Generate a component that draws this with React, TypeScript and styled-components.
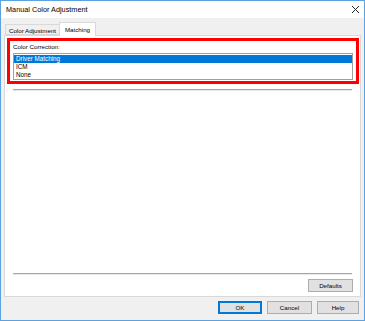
import React from "react";
import styled, { createGlobalStyle } from "styled-components";

const Global = createGlobalStyle`
  html, body { margin: 0; padding: 0; background: #ffffff; }
  * { box-sizing: border-box; }
  body { font-family: "Liberation Sans", Arial, sans-serif; }
`;

const Window = styled.div`
  width: 365px;
  height: 321px;
  border: 1px solid #5ca2e0;
  display: flex;
  flex-direction: column;
  background: #f0f0f0;
`;

const TitleBar = styled.div`
  height: 17px;
  background: #ffffff;
  display: flex;
  align-items: center;
  justify-content: space-between;
  padding: 0 4px 0 5px;
`;

const Title = styled.span`
  font-size: 7.3px;
  color: #000;
  line-height: 9px;
`;

const Body = styled.div`
  flex: 1;
  display: flex;
  flex-direction: column;
  padding: 4px 4px 0 3px;
`;

const TabRow = styled.div`
  height: 13px;
  display: flex;
  align-items: flex-end;
  padding-left: 1px;
  position: relative;
  z-index: 1;
`;

const Tab = styled.div<{ $active?: boolean; $w: number }>`
  width: ${(p) => p.$w}px;
  height: ${(p) => (p.$active ? 14 : 11)}px;
  margin-bottom: ${(p) => (p.$active ? -1 : 0)}px;
  background: ${(p) => (p.$active ? "#ffffff" : "#f0f0f0")};
  border: 1px solid #d9d9d9;
  border-bottom: ${(p) => (p.$active ? "none" : "1px solid #d9d9d9")};
  margin-left: ${(p) => (p.$active ? -1 : 0)}px;
  font-size: 6.2px;
  line-height: 9px;
  display: flex;
  justify-content: center;
  padding-top: ${(p) => (p.$active ? 2 : 1)}px;
  color: #000;
`;

const Panel = styled.div`
  width: 357px;
  height: 262px;
  background: #ffffff;
  border: 1px solid #d9d9d9;
  display: flex;
  flex-direction: column;
  padding: 2px 1px 4px 2px;
`;

const Highlight = styled.div`
  width: 352px;
  border: 3px solid #ff0000;
  padding: 0 4px 1px 3px;
  display: flex;
  flex-direction: column;
`;

const Label = styled.div`
  font-size: 6.2px;
  line-height: 9px;
  height: 9px;
  margin-top: 1px;
  color: #000;
`;

const ListBox = styled.div`
  margin-top: 2px;
  width: 340px;
  height: 27px;
  border: 1px solid #a0a0a0;
  padding: 1px 0 0 0;
  display: flex;
  flex-direction: column;
`;

const ListItem = styled.div<{ $selected?: boolean }>`
  height: 8px;
  line-height: 8px;
  font-size: 6.3px;
  padding-left: 2px;
  background: ${(p) => (p.$selected ? "#0078d7" : "transparent")};
  color: ${(p) => (p.$selected ? "#ffffff" : "#000000")};
`;

const Separator = styled.div<{ $top: number }>`
  margin: ${(p) => p.$top}px 0 0 6px;
  width: 339px;
  height: 2px;
  border-top: 1px solid #a7a7a7;
  border-bottom: 1px solid #e8e8e8;
`;

const Spacer = styled.div`
  flex: 1;
`;

const PanelFooter = styled.div`
  display: flex;
  justify-content: flex-end;
  padding-right: 6px;
  margin-top: 4px;
`;

const Button = styled.button<{ $w: number; $default?: boolean }>`
  width: ${(p) => p.$w}px;
  height: 13px;
  padding: 0;
  margin: 0;
  background: #e1e1e1;
  border: 1px solid ${(p) => (p.$default ? "#0078d7" : "#adadad")};
  box-shadow: ${(p) => (p.$default ? "inset 0 0 0 1px #0078d7" : "none")};
  font-family: "Liberation Sans", Arial, sans-serif;
  font-size: 6.2px;
  line-height: 9px;
  color: #000;
  display: flex;
  align-items: center;
  justify-content: center;
`;

const Footer = styled.div`
  display: flex;
  justify-content: flex-end;
  gap: 5px;
  margin-top: 4px;
  padding-right: 1px;
`;

const CloseIcon = () => (
  <svg width="9" height="9" viewBox="0 0 9 9">
    <path d="M1 1 L8 8 M8 1 L1 8" stroke="#222" strokeWidth="1" fill="none" />
  </svg>
);

export default function App() {
  return (
    <>
      <Global />
      <Window>
        <TitleBar>
          <Title>Manual Color Adjustment</Title>
          <CloseIcon />
        </TitleBar>
        <Body>
          <TabRow>
            <Tab $w={55}>Color Adjustment</Tab>
            <Tab $w={37} $active>Matching</Tab>
          </TabRow>
          <Panel>
            <Highlight>
              <Label>Color Correction:</Label>
              <ListBox>
                <ListItem $selected>Driver Matching</ListItem>
                <ListItem>ICM</ListItem>
                <ListItem>None</ListItem>
              </ListBox>
            </Highlight>
            <Separator $top={5} />
            <Spacer />
            <Separator $top={0} />
            <PanelFooter>
              <Button $w={45}>Defaults</Button>
            </PanelFooter>
          </Panel>
          <Footer>
            <Button $w={44} $default>OK</Button>
            <Button $w={45}>Cancel</Button>
            <Button $w={42}>Help</Button>
          </Footer>
        </Body>
      </Window>
    </>
  );
}
